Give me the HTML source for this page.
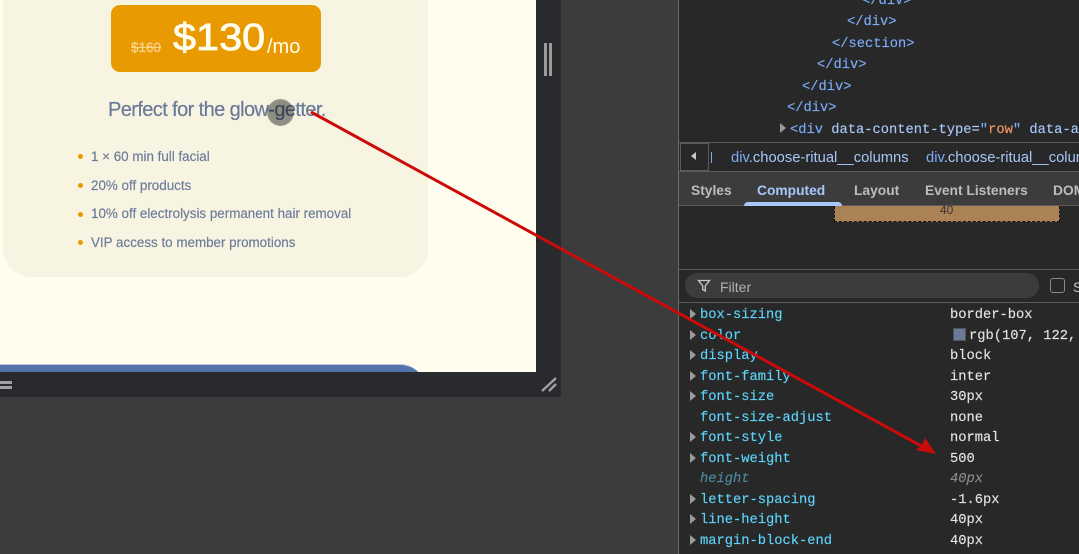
<!DOCTYPE html>
<html><head><meta charset="utf-8">
<style>
html,body{margin:0;padding:0;width:1079px;height:554px;overflow:hidden;background:#3c3c3c}
*{box-sizing:border-box}
.a{position:absolute;white-space:pre}
.s{font-family:"Liberation Sans",sans-serif}
.m{font-family:"Liberation Mono",monospace;font-size:13.75px;line-height:20px;height:20px;-webkit-text-stroke:.15px currentColor}
.t{color:#7cacf8}
.p{color:#5cd5fb;left:700px}
.v{color:#e3e3e3;left:950px}
.li{font-family:"Liberation Sans",sans-serif;font-size:13.4px;color:#6b7a99;left:91px;line-height:16px;-webkit-text-stroke:.15px #6b7a99}
.d{position:absolute;left:77.5px;width:5px;height:5px;border-radius:50%;background:#e99a00}
.tri{position:absolute;left:690px;width:0;height:0;border-left:6px solid #9a9a9a;border-top:5px solid transparent;border-bottom:5px solid transparent}
.tab{font-family:"Liberation Sans",sans-serif;font-size:13.8px;line-height:20px;color:#bdbdbd;font-weight:bold;top:180.5px}
</style></head>
<body>
<div class="a" style="left:0;top:0;width:536px;height:372px;background:#fffdee;overflow:hidden">
  <div class="a" style="left:3px;top:-40px;width:425px;height:317px;background:#f7f4e2;border-radius:28px"></div>
  <div class="a" style="left:-40px;top:364px;width:466px;height:60px;background:#5473ab;border-radius:26px;border-top:1px solid #b9c4d6"></div>
  <div class="a" style="left:111px;top:5px;width:210px;height:67px;background:#e99a00;border-radius:9px"></div>
  <div class="a s" style="left:131px;top:40px;font-size:13.5px;line-height:16px;color:#f7d48c;text-decoration:line-through;-webkit-text-stroke:.3px #f7d48c">$160</div>
  <div class="a s" style="left:173px;top:13px;font-size:38px;line-height:50px;color:#fffdee;transform-origin:0 50%;transform:scaleX(1.09);-webkit-text-stroke:.8px #fffdee">$130</div>
  <div class="a s" style="left:267px;top:35px;font-size:20px;line-height:24px;color:#fffdee">/mo</div>
  <div class="a s" style="left:108px;top:98px;font-size:20px;line-height:24px;color:#6b7a99;letter-spacing:-.6px;-webkit-text-stroke:.2px #6b7a99">Perfect for the glow-getter.</div>
  <div class="d" style="top:154px"></div><div class="a li" style="top:149px">1 × 60 min full facial</div>
  <div class="d" style="top:183px"></div><div class="a li" style="top:178px">20% off products</div>
  <div class="d" style="top:212px"></div><div class="a li" style="top:206px">10% off electrolysis permanent hair removal</div>
  <div class="d" style="top:240px"></div><div class="a li" style="top:235px">VIP access to member promotions</div>
  <div class="a" style="left:267px;top:99px;width:27px;height:27px;border-radius:50%;mix-blend-mode:multiply;background:radial-gradient(circle,#949494 0,#949494 62%,#adadad 72%,#adadad 100%)"></div>
</div>

<div class="a" style="left:536px;top:0;width:25px;height:397px;background:#292a2d"></div>
<div class="a" style="left:0;top:372px;width:536px;height:25px;background:#292a2d"></div>
<div class="a" style="left:544px;top:43px;width:3px;height:33px;background:#9a9c9a"></div>
<div class="a" style="left:549px;top:43px;width:3px;height:33px;background:#9a9c9a"></div>
<div class="a" style="left:0;top:381px;width:12px;height:3px;background:#a0a0a0"></div>
<div class="a" style="left:0;top:386px;width:12px;height:3px;background:#a0a0a0"></div>
<svg class="a" style="left:538px;top:374px" width="20" height="20"><path d="M4 17L18 4M11 17L18 10" stroke="#a0a0a0" stroke-width="2.4" fill="none"/></svg>

<div class="a" style="left:678px;top:0;width:1px;height:554px;background:#6a6a6a"></div>
<div class="a" style="left:679px;top:0;width:400px;height:554px;background:#282828;overflow:hidden"></div>

<div class="a m t" style="left:862px;top:-8px">&lt;/div&gt;</div>
<div class="a m t" style="left:847px;top:13px">&lt;/div&gt;</div>
<div class="a m t" style="left:832px;top:35px">&lt;/section&gt;</div>
<div class="a m t" style="left:817px;top:56px">&lt;/div&gt;</div>
<div class="a m t" style="left:802px;top:78px">&lt;/div&gt;</div>
<div class="a m t" style="left:787px;top:99px">&lt;/div&gt;</div>
<div class="tri" style="left:780px;top:123px"></div>
<div class="a m" style="left:790px;top:121px;color:#a8c7fa"><span class="t">&lt;div</span> data-content-type=<span class="t">"</span><span style="color:#f29766">row</span><span class="t">"</span> data-a</div>

<div class="a" style="left:679px;top:142px;width:400px;height:1px;background:#5b5b5b"></div>
<div class="a" style="left:679px;top:171px;width:400px;height:1px;background:#5b5b5b"></div>
<div class="a" style="left:680px;top:143px;width:29px;height:28px;border:1px solid #5b5b5b;background:#282828"></div>
<div class="a" style="left:691px;top:152px;width:0;height:0;border-right:5px solid #c8c8c8;border-top:4px solid transparent;border-bottom:4px solid transparent"></div>
<div class="a" style="left:711px;top:152px;width:1px;height:11px;background:#7cacf8"></div>
<div class="a s" style="left:731px;top:148px;font-size:14.75px;line-height:20px;color:#a8c7fa"><span style="color:#7cacf8">div</span>.choose-ritual__columns</div>
<div class="a s" style="left:926px;top:148px;font-size:14.75px;line-height:20px;color:#a8c7fa"><span style="color:#7cacf8">div</span>.choose-ritual__columns</div>

<div class="a" style="left:679px;top:172px;width:400px;height:33px;background:#3c3c3c"></div>
<div class="a" style="left:679px;top:205px;width:400px;height:1px;background:#5b5b5b"></div>
<div class="a tab" style="left:691px">Styles</div>
<div class="a tab" style="left:757px;color:#a8c7fa">Computed</div>
<div class="a tab" style="left:854px">Layout</div>
<div class="a tab" style="left:925px">Event Listeners</div>
<div class="a tab" style="left:1053px">DOM</div>
<div class="a" style="left:744px;top:202px;width:98px;height:4px;background:#a8c7fa;border-radius:4px 4px 0 0"></div>

<div class="a" style="left:834px;top:206px;width:226px;height:16px;background:#ab8255;border:1px dashed #111;border-top:0"></div>
<div class="a s" style="left:940px;top:202px;font-size:12px;line-height:16px;color:#333">40</div>

<div class="a" style="left:679px;top:269px;width:400px;height:1px;background:#5b5b5b"></div>
<div class="a" style="left:679px;top:302px;width:400px;height:1px;background:#5b5b5b"></div>
<div class="a" style="left:685px;top:273px;width:354px;height:25px;background:#3c3c3c;border-radius:13px"></div>
<svg class="a" style="left:697px;top:279px" width="14" height="14"><path d="M1.5 1.5H12.5L8.3 6.8V12L5.7 10.6V6.8Z" fill="none" stroke="#c7c7c7" stroke-width="1.3"/></svg>
<div class="a s" style="left:720px;top:277px;font-size:14px;line-height:20px;color:#b0b0b0">Filter</div>
<div class="a" style="left:1050px;top:278px;width:15px;height:15px;border:1px solid #8a8a8a;border-radius:3px"></div>
<div class="a s" style="left:1073px;top:277px;font-size:14px;line-height:20px;color:#c7c7c7">S</div>

<div class="tri" style="top:309px"></div><div class="a m p" style="top:306px">box-sizing</div><div class="a m v" style="top:306px">border-box</div>
<div class="tri" style="top:330px"></div><div class="a m p" style="top:327px">color</div>
<div class="a" style="left:953px;top:328px;width:13px;height:13px;background:#6b7a99;border:1px solid #555"></div><div class="a m v" style="left:969px;top:327px">rgb(107, 122,</div>
<div class="tri" style="top:350px"></div><div class="a m p" style="top:347px">display</div><div class="a m v" style="top:347px">block</div>
<div class="tri" style="top:371px"></div><div class="a m p" style="top:368px">font-family</div><div class="a m v" style="top:368px">inter</div>
<div class="tri" style="top:391px"></div><div class="a m p" style="top:388px">font-size</div><div class="a m v" style="top:388px">30px</div>
<div class="a m p" style="top:409px">font-size-adjust</div><div class="a m v" style="top:409px">none</div>
<div class="tri" style="top:432px"></div><div class="a m p" style="top:429px">font-style</div><div class="a m v" style="top:429px">normal</div>
<div class="tri" style="top:453px"></div><div class="a m p" style="top:450px">font-weight</div><div class="a m v" style="top:450px">500</div>
<div class="a m p" style="top:470px;font-style:italic;color:#4b8ba0">height</div><div class="a m v" style="top:470px;font-style:italic;color:#8a8a8a">40px</div>
<div class="tri" style="top:494px"></div><div class="a m p" style="top:491px">letter-spacing</div><div class="a m v" style="top:491px">-1.6px</div>
<div class="tri" style="top:514px"></div><div class="a m p" style="top:511px">line-height</div><div class="a m v" style="top:511px">40px</div>
<div class="tri" style="top:535px"></div><div class="a m p" style="top:532px">margin-block-end</div><div class="a m v" style="top:532px">40px</div>

<svg class="a" style="left:0;top:0" width="1079" height="554">
<path d="M311 112L925 448" stroke="#cc0a0a" stroke-width="3" fill="none"/>
<path d="M936 454L916 450L922 445L925 438Z" fill="#cc0a0a"/>
</svg>
</body></html>
